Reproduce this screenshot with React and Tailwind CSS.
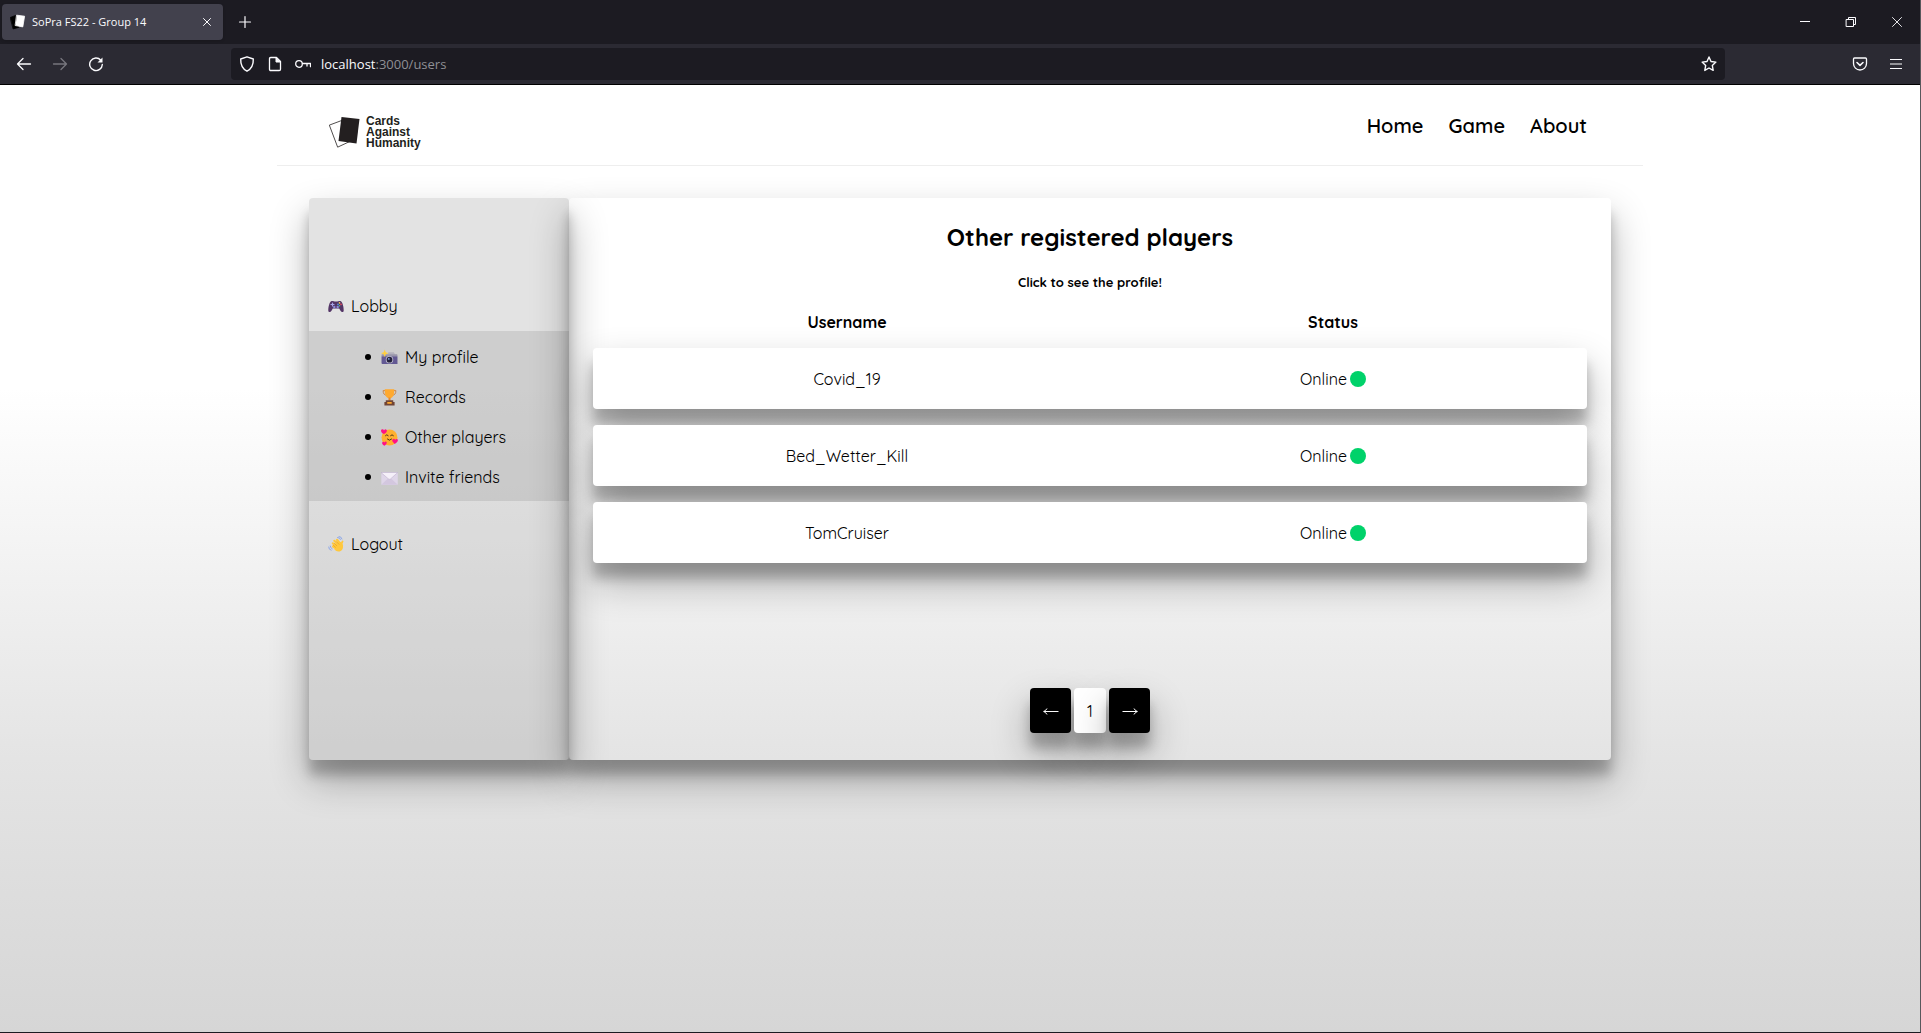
const players = ["Covid_19", "Bed_Wetter_Kill", "TomCruiser"];

const Icon = ({ children, className = "size-4", box = "0 0 16 16" }) => (
  <svg
    aria-hidden="true"
    viewBox={box}
    className={`shrink-0 ${className}`}
    fill="none"
    stroke="currentColor"
    strokeLinecap="round"
    strokeLinejoin="round"
  >
    {children}
  </svg>
);

function ToolButton({ label, children, className = "text-[#fbfbfe]" }) {
  return (
    <button type="button" aria-label={label} className={`flex size-9 items-center justify-center ${className}`}>
      {children}
    </button>
  );
}

function TabBar() {
  return (
    <div className="flex h-11 items-center bg-[#1c1b22] pl-0.5 text-[#fbfbfe]">
      <div className="flex h-9 w-[221px] items-center rounded bg-[#42414d] px-2 shadow-sm">
        <Icon>
          <path d="M.5 3.4 5.6 1.4 8.8 13.4 3.4 14.8Z" fill="#000" stroke="#000" strokeWidth=".8" />
          <path d="m6.9 1.2 7.7 1-1.8 10.7-7.3-1.3Z" fill="#fff" stroke="#fff" strokeWidth=".8" />
        </Icon>
        <span className="ml-1.5 flex-1 pt-px text-[11px]">SoPra FS22 - Group 14</span>
        <button type="button" aria-label="Close tab" className="flex size-4 items-center justify-center">
          <Icon>
            <path d="m4.5 4.5 7 7m0-7-7 7" />
          </Icon>
        </button>
      </div>
      <button type="button" aria-label="New tab" className="ml-1 flex size-9 items-center justify-center">
        <Icon>
          <path d="M8 2.500v11M2.500 8h11" strokeWidth="1.200" />
        </Icon>
      </button>
      <div className="ml-auto flex">
        <button type="button" aria-label="Minimize" className="flex h-11 w-[46px] items-center justify-center">
          <Icon>
            <path d="M3 7.500h10" strokeLinecap="butt" />
          </Icon>
        </button>
        <button type="button" aria-label="Restore" className="flex h-11 w-[46px] items-center justify-center">
          <Icon>
            <path d="M3.500 5.500h7v7h-7zM5.500 5.500v-2h7v7h-2" strokeLinejoin="miter" />
          </Icon>
        </button>
        <button type="button" aria-label="Close window" className="flex h-11 w-[46px] items-center justify-center">
          <Icon>
            <path d="m3.500 3.500 9 9m0-9-9 9" strokeWidth=".9" />
          </Icon>
        </button>
      </div>
    </div>
  );
}

function Toolbar() {
  return (
    <div className="flex h-[41px] items-center border-b border-black bg-[#2b2a33] px-1.5 text-[#fbfbfe]">
      <ToolButton label="Back">
        <Icon>
          <path d="M14.500 8H1.500M7 2.500 1.500 8 7 13.500" strokeWidth="1.300" />
        </Icon>
      </ToolButton>
      <ToolButton label="Forward" className="text-[#77767e]">
        <Icon>
          <path d="M1.500 8h13M9 2.500 14.500 8 9 13.500" strokeWidth="1.300" />
        </Icon>
      </ToolButton>
      <ToolButton label="Reload">
        <Icon>
          <path d="M12.800 4.200A6.300 6.300 0 1 0 14.300 8.500" strokeWidth="1.400" />
          <path d="M14.500 1.500v5h-5Z" fill="currentColor" stroke="none" />
        </Icon>
      </ToolButton>
      <div className="ml-[117px] flex h-8 flex-1 items-center rounded bg-[#1c1b22] px-2">
        <Icon>
          <path d="M8 .8 14.300 3c.2 5.500-1.700 9.800-6.300 12.200C3.400 12.800 1.500 8.500 1.700 3Z" strokeWidth="1.400" />
        </Icon>
        <Icon className="ml-3 size-4">
          <path d="M3.800 1.500h5.700l4 4v7.700q0 1.300-1.300 1.300H3.800q-1.300 0-1.300-1.300V2.800q0-1.300 1.300-1.300Z" strokeWidth="1.300" />
          <path d="M9 1.500V6h4.500Z" fill="currentColor" />
        </Icon>
        <Icon className="ml-3 size-4">
          <circle cx="4" cy="8" r="3.300" strokeWidth="1.300" />
          <path d="M7.500 7.500h8v3.200M12 7.500v2.500" strokeWidth="1.300" />
        </Icon>
        <div
          role="textbox"
          aria-label="Address"
          tabIndex={0}
          className="ml-2.5 flex-1 pt-0.5 text-[13px] text-[#8f8f94]"
        >
          <span className="text-[#fbfbfe]">localhost</span>:3000/users
        </div>
        <button type="button" aria-label="Bookmark this page">
          <Icon>
            <path
              d="m8 1 2 4.500 4.900.6-3.600 3.300.9 5L8 12l-4.200 2.400.9-5L1.100 6.100 6 5.500Z"
              strokeWidth="1.400"
            />
          </Icon>
        </button>
      </div>
      <div className="ml-[117px] flex">
        <ToolButton label="Save to Pocket">
          <Icon>
            <path d="M2.500 2h11q1 0 1 1v4.500a6.500 6.500 0 0 1-13 0V3q0-1 1-1Z" strokeWidth="1.300" />
            <path d="m5 6.500 3 2.800 3-2.800" strokeWidth="1.600" />
          </Icon>
        </ToolButton>
        <ToolButton label="Menu">
          <Icon>
            <path d="M2 3.500h12M2 8h12M2 12.500h12" strokeWidth="1.200" strokeLinecap="butt" />
          </Icon>
        </ToolButton>
      </div>
    </div>
  );
}

function Logo() {
  return (
    <a href="#home" aria-label="Cards Against Humanity" className="flex items-center gap-1.5 text-[#231f20]">
      <Icon className="h-8 w-[31px]" box="0 0 31 32">
        <path d="M.7 9 18 2.500 24 24 9 31Z" strokeWidth=".8" />
        <path d="m12.500 1 18 2-3 24.500-18-2.500Z" fill="currentColor" stroke="none" />
      </Icon>
      <span className="font-['Liberation_Sans',Arial,sans-serif] text-[12px] leading-[11px] font-bold">
        Cards
        <br />
        Against
        <br />
        Humanity
      </span>
    </a>
  );
}

const Gamepad = () => (
  <Icon>
    <path d="M3.500 3C1.500 3.500.3 9 .3 12.500c0 2 2.200 2 3.200.3l1.300-2.300h6.400l1.300 2.300c1 1.700 3.200 1.700 3.200-.3C15.700 9 14.500 3.500 12.500 3c-1.500-.4-2 .5-4.500.5S5 2.600 3.500 3Z" fill="#533566" stroke="none" />
    <path d="M4.500 5v3M3 6.500h3" stroke="#a8a5e6" strokeWidth="1.200" />
    <circle cx="6.300" cy="9" r="1.200" fill="#8b8bd8" stroke="none" />
    <circle cx="9.700" cy="9" r="1.200" fill="#8b8bd8" stroke="none" />
    <g stroke="none">
      <circle cx="11.500" cy="4.900" r=".8" fill="#ffd44a" />
      <circle cx="13" cy="6.400" r=".8" fill="#f04a5b" />
      <circle cx="10" cy="6.400" r=".8" fill="#4a9af0" />
      <circle cx="11.500" cy="7.800" r=".8" fill="#4ac48a" />
    </g>
  </Icon>
);

const Camera = () => (
  <Icon className="size-[17px]">
    <g stroke="none">
      <path d="M6 5.500 7 3h5l1.500 2.500Z" fill="#b4b2bd" />
      <rect x=".5" y="5" width="15" height="2.500" rx=".7" fill="#9996ab" />
      <path d="M.5 7h15v7H1.300q-.8 0-.8-.8Z" fill="#635994" />
      <circle cx="8" cy="10" r="3.500" fill="#c0bed0" />
      <circle cx="8" cy="10" r="2.700" fill="#25233d" />
      <circle cx="7.300" cy="9.300" r=".9" fill="#7897d0" />
      <path d="m3.500.5 1 2.500L7 4 4.500 5 3.500 7.500 2.500 5 0 4l2.500-1Z" fill="#ffcf3e" />
    </g>
  </Icon>
);

const Trophy = () => (
  <Icon className="size-[17px]">
    <path d="M4.500 1.500H2C2 4.300 3 5.900 5.500 5.900M11.500 1.500H14c0 2.800-1 4.400-3.500 4.400" stroke="#c98246" strokeWidth=".9" />
    <g stroke="none">
      <path d="M3.500.3h9c0 5.700-1.400 8.200-4.500 8.600C4.900 8.500 3.500 6 3.500.3Z" fill="#ffa92e" />
      <path d="M7 8h2v3H7Z" fill="#e8892b" />
      <path d="M4.500 10.700h7v1.500h1.300v3.300H3.200v-3.300h1.300Z" fill="#704536" />
      <rect x="5.800" y="12.300" width="4.400" height="1.600" rx=".4" fill="#ffa92e" />
    </g>
  </Icon>
);

const Smile = () => (
  <Icon className="size-[17px]">
    <circle cx="8" cy="8" r="7.500" fill="#ffb02e" stroke="none" />
    <path d="M4.200 6.200q1.200-1.700 2.600 0M9 6.200q1.400-1.700 2.700 0M6 9.500q2 2.300 4 0" stroke="#43301a" strokeWidth=".9" />
    <g fill="#ff1185" stroke="none">
      <path d="M2.600 4.800C-.8 3-.4.300 1.400.300q1.100 0 1.400 1Q4-.3 5.100.600C6.400 2 4.600 4 2.600 4.800Z" />
      <path d="M13 14c-3-2-3-4.300-1.300-4.700q1.200-.2 1.500 1 1.100-1.500 2.300-.6c1.200 1.300-.5 3.300-2.500 4.300Z" />
      <path d="M3.300 15.800C.8 14.500.5 12.500 1.900 12q1-.2 1.300.7.900-1.300 1.900-.6c1 .9-.2 2.900-1.800 3.700Z" />
    </g>
  </Icon>
);

const Envelope = () => (
  <Icon className="size-[17px]">
    <rect x=".3" y="3.300" width="15.500" height="11.500" fill="#dfd6e9" stroke="none" />
    <path d="M.3 14.800 6 9.300h4l5.800 5.500Z" fill="#d3c7df" stroke="none" />
    <path d="M.3 3.300h15.500L9 9.300q-1 .8-2 0Z" fill="#f5f0f9" stroke="#b9abc8" strokeWidth=".5" />
  </Icon>
);

const Wave = () => (
  <Icon>
    <g stroke="#ffc83d" strokeWidth="2.200">
      <path d="m5 10.500 5 3M4.800 7.300l5 5M6.300 4.800l5 5M9 3.800l4 5" />
      <path d="M14.500 5.500Q13 7.500 14 10.500" strokeWidth="1.900" />
    </g>
    <path d="m7 7.500 6-1.500 1.900 3.500c.5 3.500-1.200 6-4.400 6-1.700 0-3-1-4-2Z" fill="#ffc83d" stroke="none" />
    <path d="m6.300 7.300 2.500 2.500M5.300 9.300l2.200 2M8.500 5.700l2.500 2.600" stroke="#e59a19" strokeWidth=".6" />
    <path d="M9.500 1.500q2.500-.2 3 2M11 .5q2.500 0 3 2.500M.7 11q-.2 2.800 2.500 3.200M2.200 10q0 1.900 2 2.800" stroke="#8ea8e8" strokeWidth="1" />
  </Icon>
);

const submenu = [
  { label: "My profile", icon: Camera },
  { label: "Records", icon: Trophy },
  { label: "Other players", icon: Smile },
  { label: "Invite friends", icon: Envelope },
];

function Sidebar() {
  return (
    <aside className="w-[260px] shrink-0 rounded bg-[#949494]/26 pt-[83px] shadow-[0_19px_38px_rgba(0,0,0,0.3),0_15px_12px_rgba(0,0,0,0.22)]">
      <a href="#lobby" className="flex h-[50px] items-center gap-[7px] pl-[19px]">
        <Gamepad />
        Lobby
      </a>
      <ul className="bg-black/9 pt-1.5 pb-1 pl-14">
        {submenu.map(({ label, icon: Glyph }) => (
          <li key={label} className="flex h-10 items-center">
            <span className="mr-2.5 size-1.5 rounded-full bg-black" />
            <a href={`#${label}`} className="flex items-center gap-[7px]">
              <Glyph />
              {label}
            </a>
          </li>
        ))}
      </ul>
      <a href="#logout" className="mt-[18px] flex h-[50px] items-center gap-[7px] pl-[19px]">
        <Wave />
        Logout
      </a>
    </aside>
  );
}

const PageArrow = ({ label, path }) => (
  <button
    type="button"
    aria-label={label}
    className="flex h-[45px] w-[41px] items-center justify-center rounded bg-black text-white shadow-[0_19px_38px_rgba(0,0,0,0.3),0_15px_12px_rgba(0,0,0,0.22)]"
  >
    <Icon>
      <path d={path} strokeLinecap="butt" />
    </Icon>
  </button>
);

function Players() {
  return (
    <main className="flex min-w-0 flex-1 flex-col items-center rounded px-6 pt-[23px] pb-[27px] shadow-[0_19px_38px_rgba(0,0,0,0.3),0_15px_12px_rgba(0,0,0,0.22)]">
      <h1 className="text-2xl font-bold">Other registered players</h1>
      <p className="mt-[21px] text-[13px] leading-4 font-bold">Click to see the profile!</p>
      <table className="mt-5 block w-full">
        <thead className="block">
          <tr className="grid grid-cols-2 px-[11px]">
            <th className="font-bold">Username</th>
            <th className="font-bold">Status</th>
          </tr>
        </thead>
        <tbody className="mt-3.5 flex flex-col gap-4">
          {players.map((name) => (
            <tr
              key={name}
              className="grid h-[61px] grid-cols-2 items-center rounded bg-white px-[11px] text-center shadow-[0_19px_38px_rgba(0,0,0,0.3),0_15px_12px_rgba(0,0,0,0.22)]"
            >
              <td>
                <a href={`#${name}`}>{name}</a>
              </td>
              <td className="flex items-center justify-center gap-[3px]">
                Online
                <span className="size-4 rounded-full bg-[#00d26a]" />
              </td>
            </tr>
          ))}
        </tbody>
      </table>
      <nav aria-label="Pages" className="mt-auto flex gap-[3px]">
        <PageArrow label="Previous page" path="M.5 8.500h15M4 5.500Q3 7.500.8 8.500 3 9.500 4 11.500" />
        <button
          type="button"
          aria-current="page"
          className="h-[45px] w-8 rounded bg-white shadow-[0_19px_38px_rgba(0,0,0,0.3),0_15px_12px_rgba(0,0,0,0.22)]"
        >
          1
        </button>
        <PageArrow label="Next page" path="M.5 8.500h15M12 5.500q1 2 3.200 3-2.200 1-3.200 3" />
      </nav>
    </main>
  );
}

export default function App() {
  return (
    <div className="flex min-h-screen flex-col border-r border-b border-r-[#58585c] border-b-[#1c1b22] bg-white font-['Open_Sans',sans-serif]">
      <TabBar />
      <Toolbar />
      <div className="flex-1 bg-[linear-gradient(#fff_32%,#e4e4e4_71%,#d6d6d6)] font-[Quicksand,Inter,sans-serif] text-base text-black">
        <div className="mx-auto max-w-[1366px]">
          <header className="flex h-[81px] items-center justify-between border-b border-[#eee] pr-14 pl-[52px]">
            <div className="pt-3.5">
              <Logo />
            </div>
            <nav aria-label="Main" className="flex gap-[25px] pt-0.5 text-xl font-semibold">
              <a href="#home">Home</a>
              <a href="#game">Game</a>
              <a href="#about">About</a>
            </nav>
          </header>
          <div className="mx-8 mt-8 flex min-h-[562px]">
            <Sidebar />
            <Players />
          </div>
        </div>
      </div>
    </div>
  );
}
